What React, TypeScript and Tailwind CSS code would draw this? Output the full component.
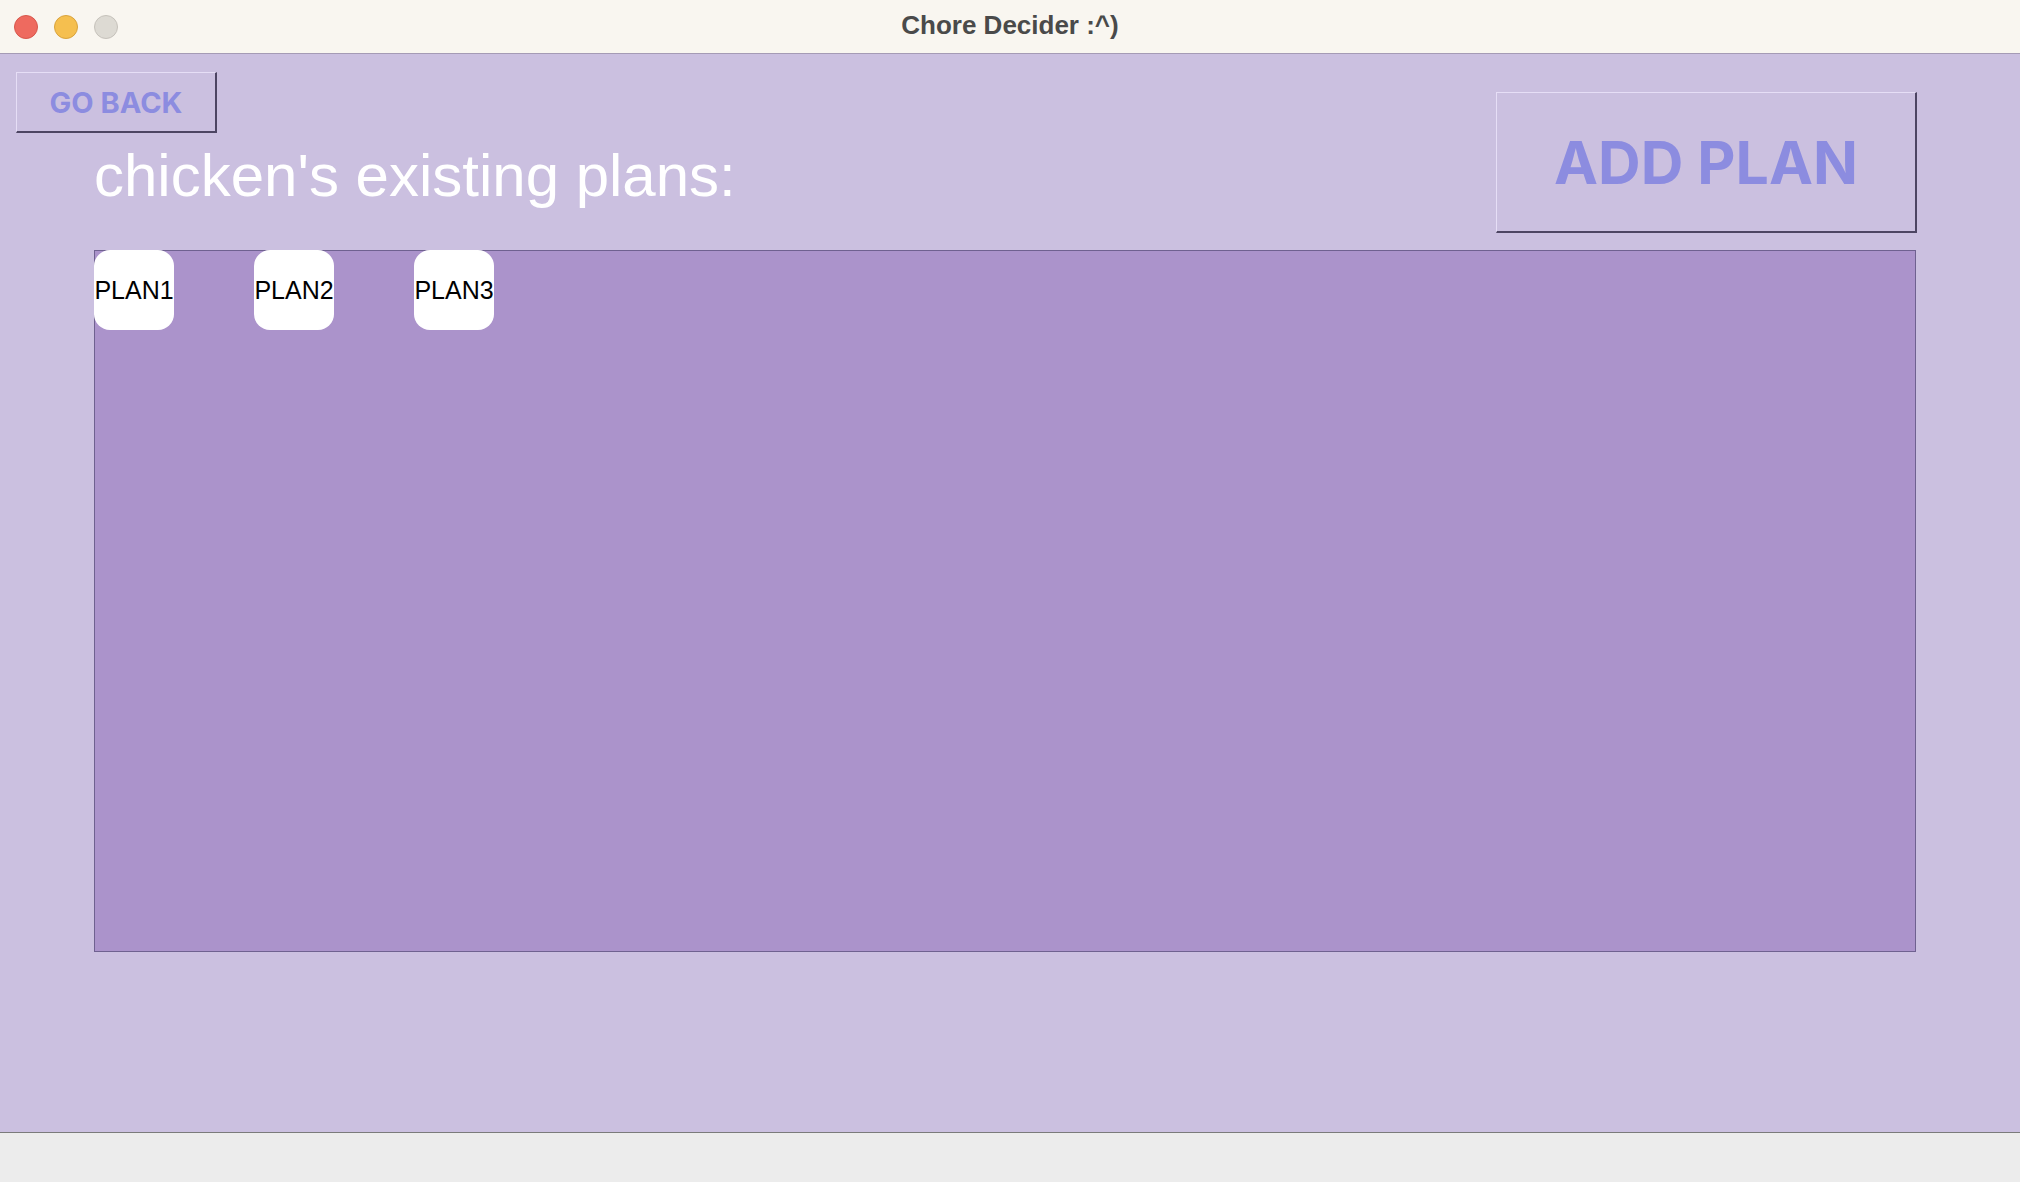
import React from 'react';

// --- Type Definitions ---
type PlanChipProps = {
    name: string;
};

type BevelButtonProps = {
    label: string;
    className: string;
};

const plans = ['PLAN1', 'PLAN2', 'PLAN3'];

// --- Title bar with the traffic lights ---
const TitleBar: React.FC = () => {
    return (
        <div className="grid grid-cols-[1fr_auto_1fr] items-center h-[54px] shrink-0 bg-[#f9f6f0] border-b border-[#a59bb5]">
            <div className="flex items-center gap-[16px] pl-[14px]">
                <span className="w-[24px] h-[24px] rounded-full bg-[#ee6a5f] border border-[#d8574c]" />
                <span className="w-[24px] h-[24px] rounded-full bg-[#f5bf4f] border border-[#d9a33d]" />
                <span className="w-[24px] h-[24px] rounded-full bg-[#dddad3] border border-[#c6c2bb]" />
            </div>
            <h1 className="pb-[4px] text-[26px] font-bold text-[#4a4a4a] font-['Liberation_Sans',Arial,sans-serif] leading-none">
                Chore Decider :^)
            </h1>
            <div />
        </div>
    );
};

// --- Raised button, old-school bevel ---
const BevelButton: React.FC<BevelButtonProps> = ({ label, className }) => {
    return (
        <button
            className={`flex items-center justify-center bg-transparent border-t border-l border-t-[#e6def6] border-l-[#e6def6] border-b-2 border-r-2 border-b-[#4d4563] border-r-[#4d4563] font-['Inter',sans-serif] font-bold text-[#8c8ce0] leading-none ${className}`}
        >
            {label}
        </button>
    );
};

// --- Single plan tile ---
const PlanChip: React.FC<PlanChipProps> = ({ name }) => {
    return (
        <div className="flex items-center justify-center w-[80px] h-[80px] rounded-[16px] bg-white">
            <span className="whitespace-nowrap text-[25px] text-black font-['Liberation_Sans',Arial,sans-serif] leading-none">
                {name}
            </span>
        </div>
    );
};

const App: React.FC = () => {
    return (
        <div className="flex flex-col w-[2020px] h-[1182px] overflow-hidden">
            <TitleBar />

            <main className="flex-1 flex flex-col pt-[18px] bg-[#cbc0e0]">
                <div className="flex items-start justify-between">
                    <div className="flex flex-col pl-[16px]">
                        <BevelButton label="GO BACK" className="w-[201px] h-[61px] text-[29px]" />
                        <h2 className="mt-[13px] ml-[78px] text-[60px] leading-none text-white font-['Liberation_Sans',Arial,sans-serif]">
                            chicken's existing plans:
                        </h2>
                    </div>
                    <BevelButton label="ADD PLAN" className="mt-[20px] mr-[103px] w-[421px] h-[141px] text-[59px]" />
                </div>

                <section className="mt-[17px] ml-[94px] w-[1822px] h-[702px] bg-[#ab93cb] shadow-[inset_0_0_0_1px_#6f6190]">
                    <div className="flex gap-[80px]">
                        {plans.map(p => (
                            <PlanChip key={p} name={p} />
                        ))}
                    </div>
                </section>
            </main>

            <footer className="h-[50px] shrink-0 bg-[#ececec] border-t border-[#7b7b7b]" />
        </div>
    );
};

export default App;
